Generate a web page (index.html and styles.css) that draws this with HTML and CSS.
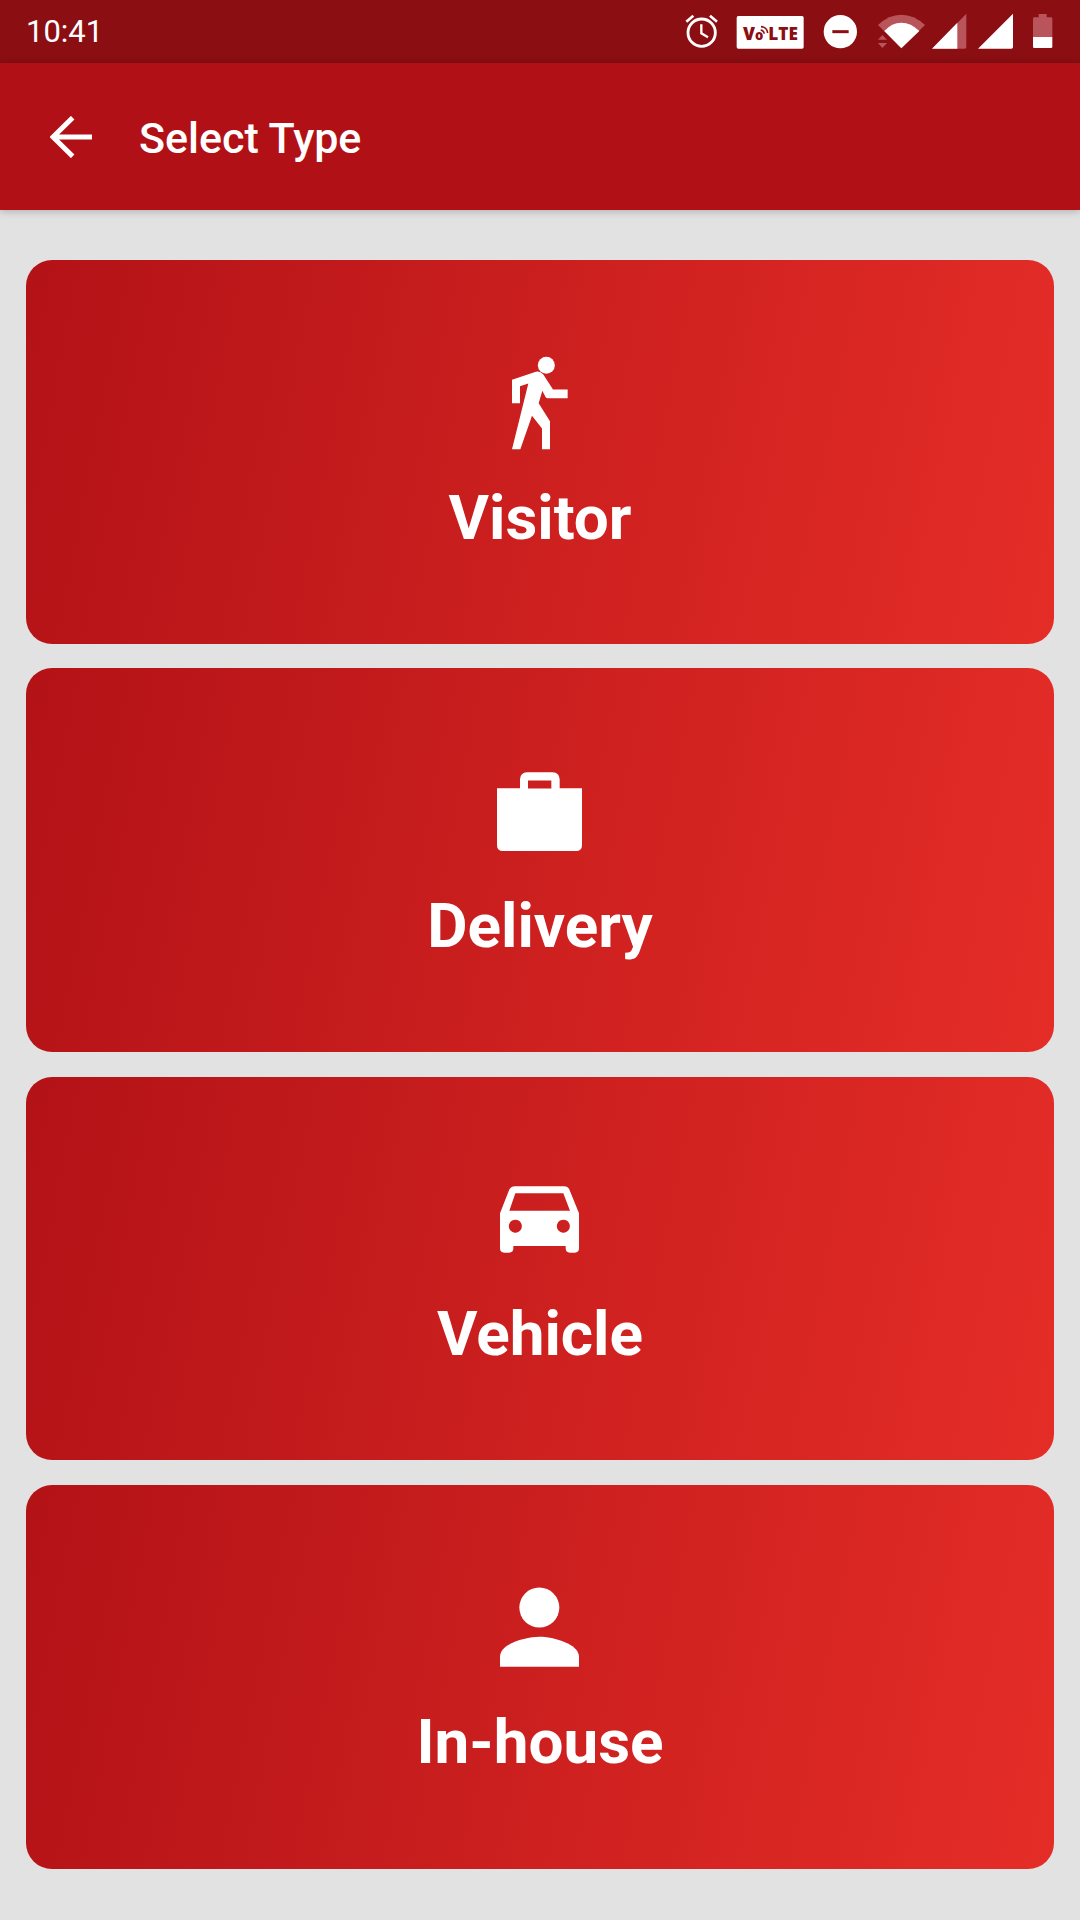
FILE: index.html
```html
<!DOCTYPE html>
<html lang="en">
<head>
<meta charset="utf-8">
<title>Select Type</title>
<link rel="stylesheet" href="styles.css">
</head>
<body>
<div class="screen">
  <div class="status">
    <span class="clock">10:41</span>
    <svg class="status-icons" viewBox="0 0 1230 189" aria-hidden="true">
      <g fill="none" stroke="#fff">
        <circle cx="95" cy="98" r="41" stroke-width="8.5"/>
        <path d="M94 73V100L114 112" stroke-width="7"/>
        <path d="M49 65L70 47M141 65L120 47" stroke-width="8"/>
      </g>
      <rect x="200" y="48" width="201" height="98" rx="5" fill="#fff"/>
      <g class="volte">
        <text x="219" y="119" font-size="53" textLength="36" lengthAdjust="spacingAndGlyphs">V</text>
        <text x="255" y="119" font-size="42" textLength="25" lengthAdjust="spacingAndGlyphs">o</text>
        <text x="295" y="119" font-size="53" textLength="89" lengthAdjust="spacingAndGlyphs">LTE</text>
      </g>
      <path d="M272 90Q281 91 283 101M273 80Q291 81 293 99" fill="none" stroke="#8b0e12" stroke-width="5"/>
      <circle cx="511" cy="95" r="50" fill="#fff"/>
      <path d="M487 95H536" stroke="#8b0e12" stroke-width="9"/>
      <g transform="translate(570 0)">
        <path d="M54 75Q86 44 124 44T195 75L124 145Z" fill="#b9545a"/>
        <path d="M73 93Q95 68 124 68T178 93L124 145Z" fill="#fff"/>
        <path d="M54 119L67 105L81 119ZM54 129H81L67 144Z" fill="#b9545a"/>
        <path d="M216 146L319 41V141Q319 146 314 146Z" fill="#b9545a"/>
        <path d="M216 146L292 68V146Z" fill="#fff"/>
        <path d="M354 146L459 41V141Q459 146 454 146Z" fill="#fff"/>
        <path d="M536 42H560V52H573Q577 52 577 56V111H519V56Q519 52 523 52H536Z" fill="#b9545a"/>
        <path d="M519 111H577V140Q577 144 573 144H523Q519 144 519 140Z" fill="#fff"/>
      </g>
    </svg>
  </div>
  <header class="appbar">
    <svg class="back" viewBox="0 0 126 126" aria-label="Back"><path d="M68 5L9 63L68 121M8 63H126" fill="none" stroke="#fff" stroke-width="15"/></svg>
    <h1 class="title">Select Type</h1>
  </header>
  <main class="cards">
    <section class="card">
      <svg class="icon" viewBox="150 37.5 360 360">
        <circle cx="349" cy="104" r="25.5"/>
        <path d="M246 148L313 125Q329 119 340 132L369 177H413V203H353Q349 203 347 200L337 181L326 218L360 272V356H336V294L306 256L271 356H246L295 159L270 167V218H246Z"/>
      </svg>
      <span class="label">Visitor</span>
    </section>
    <section class="card">
      <svg class="icon" viewBox="210 32.25 360 360">
        <path fill-rule="evenodd" d="M261 144H330V117Q331 97 351 96H428Q448 97 449 117V144H516V314Q516 332 498 332H279Q261 332 261 314ZM354 121V145H424V121Z"/>
      </svg>
      <span class="label">Delivery</span>
    </section>
    <section class="card">
      <svg class="icon" viewBox="210 -3 360 360">
        <path fill-rule="evenodd" d="M270 160L297 91Q302 79 315 79H462Q475 79 479 91L507 160V265Q507 278 494 278H480Q467 278 467 265V258H310V265Q310 278 297 278H283Q270 278 270 265ZM316 100L298 152H480L460 100ZM316 179a19.5 19.5 0 1 0 .1 0ZM460 179a19.5 19.5 0 1 0 .1 0Z"/>
      </svg>
      <span class="label">Vehicle</span>
    </section>
    <section class="card">
      <svg class="icon" viewBox="240 21.75 360 360">
        <circle cx="418" cy="143.500" r="60"/>
        <path d="M300 321V291C300 252 378 231 418.500 231S537 252 537 291V321Z"/>
      </svg>
      <span class="label">In-house</span>
    </section>
  </main>
</div>
</body>
</html>
```
FILE: styles.css
```css
* { box-sizing: border-box; }
body {
  margin: 0;
  font-family: Roboto, "Liberation Sans", sans-serif;
  color: #fff;
}
.screen {
  width: 1080px;
  height: 1920px;
  display: flex;
  flex-direction: column;
  background: #e2e2e2;
}
.status {
  height: 63px;
  padding-left: 26px;
  display: flex;
  align-items: center;
  justify-content: space-between;
  background: #8b0e12;
}
.clock { font-size: 31px; line-height: 36px; }
.status-icons { width: 410px; height: 63px; }
.volte {
  font-family: "Open Sans", sans-serif;
  font-weight: 800;
  fill: #8b0e12;
}
.appbar {
  height: 147px;
  padding: 0 50px;
  display: flex;
  align-items: center;
  gap: 47px;
  background: #b11116;
  box-shadow: 0 1px 8px rgba(0, 0, 0, .25);
}
.back { width: 42px; height: 42px; }
.title {
  margin: 3px 0 0;
  font-size: 43px;
  font-weight: 500;
  line-height: 50px;
}
.cards {
  height: 1658.75px;
  padding: 50px 26px 0;
  display: grid;
  grid-template-rows: repeat(4, 1fr);
  gap: 24.5px;
}
.card {
  padding-top: 82.5px;
  display: flex;
  flex-direction: column;
  align-items: center;
  border-radius: 26px;
  background: linear-gradient(101deg, #b31217, #e52d27);
}
.icon { width: 120px; height: 120px; fill: #fff; }
.label {
  margin-top: 18px;
  font-size: 62px;
  font-weight: 700;
  line-height: 74px;
}
```
